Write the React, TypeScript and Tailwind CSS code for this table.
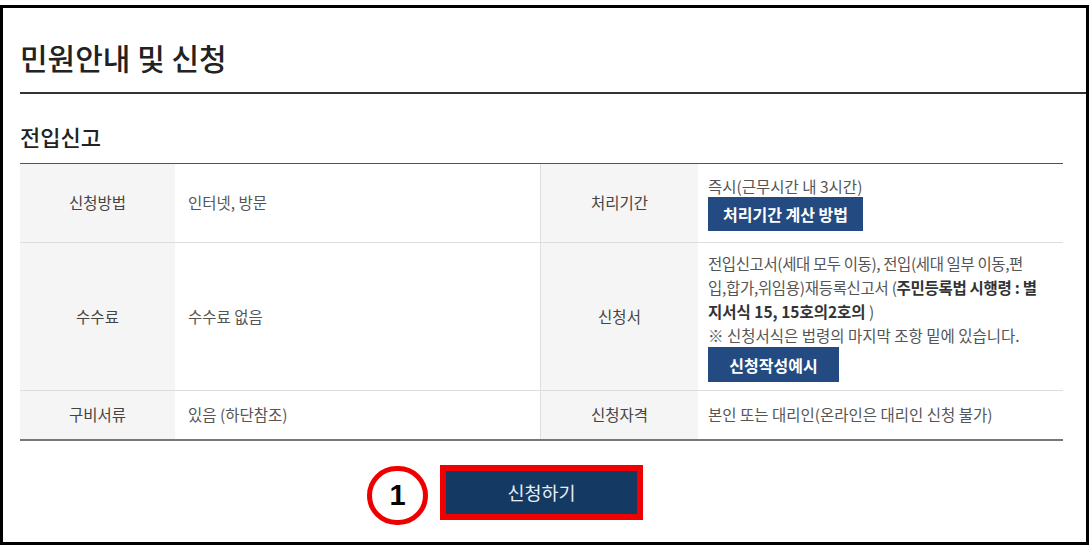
import React from "react";

const font = "font-['Noto_Sans_CJK_KR','Noto_Sans',sans-serif]";

const App = () => {
  return (
    <div className={`w-[1091px] h-[545px] bg-white pt-[5px] ${font}`}>
      <div className="w-[1089px] h-[540px] border-[3px] border-black flex flex-col">
        {/* Page title */}
        <h1 className="pl-[17px] pt-[29px] text-[30px] leading-[40px] font-medium text-[#222]">
          민원안내 및 신청
        </h1>
        <div className="ml-[17px] mt-[15px] h-[2px] bg-[#333]" />

        {/* Section title */}
        <h2 className="pl-[17px] mt-[27px] text-[22px] leading-[30px] font-medium text-[#222]">
          전입신고
        </h2>

        {/* Info table */}
        <div className="ml-[17px] mt-[12px] w-[1043px] border-t border-t-[#555] border-b-2 border-b-[#777] text-[15.5px] text-[#555]">
          {/* Row 1 */}
          <div className="grid grid-cols-[155px_366px_157px_365px] h-[79px] border-b border-[#ddd]">
            <div className="bg-[#f5f5f5] flex items-center justify-center text-[#444]">
              신청방법
            </div>
            <div className="flex items-center pl-[13px] border-r border-[#ddd]">
              인터넷, 방문
            </div>
            <div className="bg-[#f5f5f5] flex items-center justify-center text-[#444]">
              처리기간
            </div>
            <div className="flex flex-col justify-center pl-[10px]">
              <p className="leading-[22px]">즉시(근무시간 내 3시간)</p>
              <button
                type="button"
                className="w-[155px] h-[34px] bg-[#234b82] text-white text-[16px] font-semibold"
              >
                처리기간 계산 방법
              </button>
            </div>
          </div>

          {/* Row 2 */}
          <div className="grid grid-cols-[155px_366px_157px_365px] h-[148px] border-b border-[#ddd]">
            <div className="bg-[#f5f5f5] flex items-center justify-center text-[#444]">
              수수료
            </div>
            <div className="flex items-center pl-[13px] border-r border-[#ddd]">
              수수료 없음
            </div>
            <div className="bg-[#f5f5f5] flex items-center justify-center text-[#444]">
              신청서
            </div>
            <div className="flex flex-col justify-center pl-[10px] whitespace-nowrap">
              <p className="leading-[24px]">
                <span className="tracking-[-0.4px]">
                  전입신고서(세대 모두 이동), 전입(세대 일부 이동,편
                </span>
                <br />
                <span className="tracking-[-0.3px]">
                  입,합가,위임용)재등록신고서 (
                  <b className="font-bold text-[#333]">주민등록법 시행령 : 별</b>
                </span>
                <br />
                <b className="font-bold text-[#333]">지서식 15, 15호의2호의</b> )
                <br />※ 신청서식은 법령의 마지막 조항 밑에 있습니다.
              </p>
              <button
                type="button"
                className="w-[131px] h-[35px] bg-[#234b82] text-white text-[16px] font-semibold"
              >
                신청작성예시
              </button>
            </div>
          </div>

          {/* Row 3 */}
          <div className="grid grid-cols-[155px_366px_157px_365px] h-[48px]">
            <div className="bg-[#f5f5f5] flex items-center justify-center text-[#444]">
              구비서류
            </div>
            <div className="flex items-center pl-[13px] border-r border-[#ddd]">
              있음 (하단참조)
            </div>
            <div className="bg-[#f5f5f5] flex items-center justify-center text-[#444]">
              신청자격
            </div>
            <div className="flex items-center pl-[10px]">
              본인 또는 대리인(온라인은 대리인 신청 불가)
            </div>
          </div>
        </div>

        {/* Apply button */}
        <div className="ml-[17px] w-[1043px] mt-[24px] flex justify-center">
          <div className="relative">
            <span className="absolute left-[-73px] top-[1px] w-[61px] h-[59px] rounded-full border-[5px] border-[#ee0000] bg-white flex items-center justify-center text-[29px] font-bold text-black font-['Liberation_Sans',sans-serif]">
              1
            </span>
            <div className="w-[203px] h-[55px] border-[6px] border-[#f00000]">
              <button
                type="button"
                className="w-full h-full bg-[#143a64] text-[#e8eef6] text-[18.5px]"
              >
                신청하기
              </button>
            </div>
          </div>
        </div>
      </div>
    </div>
  );
};

export default App;
